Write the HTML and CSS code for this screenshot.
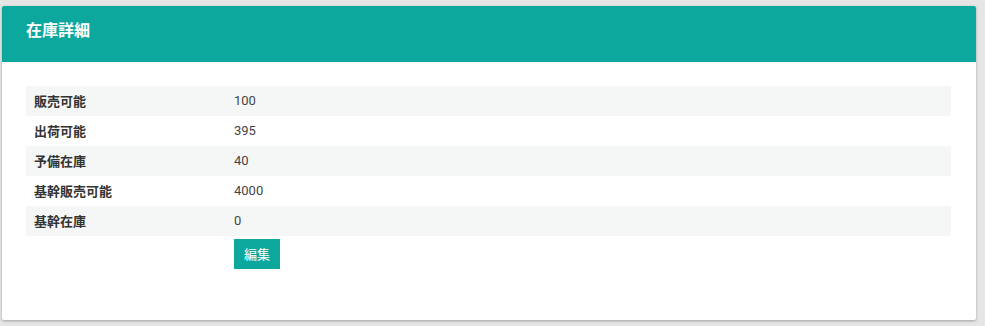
FILE: index.html
```html
<!DOCTYPE html>
<html lang="ja">
<head>
<meta charset="utf-8">
<link rel="stylesheet" href="styles.css">
</head>
<body>
<div class="card">
  <div class="card-header">在庫詳細</div>
  <div class="card-body">
    <table class="detail">
      <tr class="odd"><th>販売可能</th><td>100</td></tr>
      <tr><th>出荷可能</th><td>395</td></tr>
      <tr class="odd"><th>予備在庫</th><td>40</td></tr>
      <tr><th>基幹販売可能</th><td>4000</td></tr>
      <tr class="odd"><th>基幹在庫</th><td>0</td></tr>
      <tr class="actions"><th></th><td><button class="btn">編集</button></td></tr>
    </table>
  </div>
</div>
</body>
</html>
```
FILE: styles.css
```css
html, body { margin: 0; padding: 0; }
body {
  background: #e6e6e6;
  font-family: Roboto, "Noto Sans CJK JP", sans-serif;
  font-size: 13px;
  color: #333;
  padding: 6px 9px 0 2px;
  height: 326px;
  box-sizing: border-box;
}
.card {
  background: #fff;
  border-radius: 2px;
  box-shadow: 0 1px 3px rgba(0,0,0,0.3);
  height: 314px;
  box-sizing: border-box;
}
.card-header {
  background: #0ca89e;
  color: #fff;
  font-weight: bold;
  font-size: 16px;
  height: 56px;
  line-height: 50px;
  padding: 0 24px;
  border-radius: 2px 2px 0 0;
}
.card-body {
  padding: 24px 25px 24px 24px;
}
.detail {
  width: 100%;
  border-collapse: collapse;
}
.detail th, .detail td {
  height: 30px;
  padding: 0 8px 2px;
  text-align: left;
  vertical-align: middle;
  box-sizing: border-box;
}
.detail th {
  width: 200px;
  font-weight: bold;
  color: #333;
}
.detail td { color: #444; }
.detail tr.odd { background: #f5f7f7; }
.detail tr.actions td { padding-top: 3px; padding-bottom: 0; vertical-align: top; }
.btn {
  background: #0ca89e;
  color: #fff;
  border: none;
  font-family: Roboto, "Noto Sans CJK JP", sans-serif;
  font-size: 13px;
  height: 30px;
  width: 46px;
  padding: 0 0 1px;
  border-radius: 0;
}
```
